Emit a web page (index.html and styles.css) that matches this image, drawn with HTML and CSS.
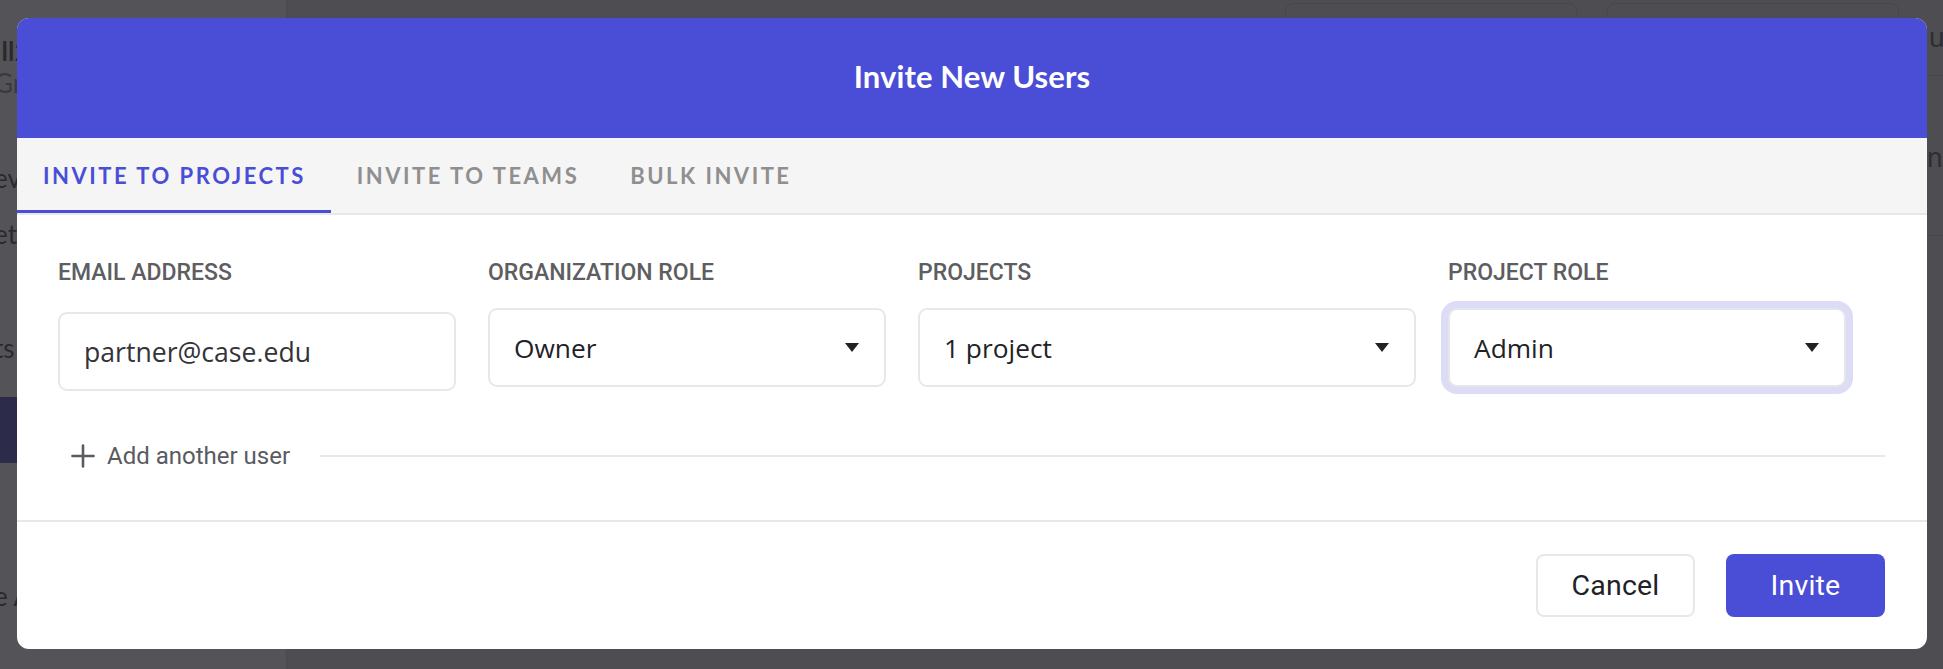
FILE: index.html
```html
<!DOCTYPE html>
<html lang="en">
<head>
<meta charset="utf-8">
<title>Invite New Users</title>
<link rel="stylesheet" href="styles.css">
</head>
<body>
<div class="app">
  <aside class="sidebar">
    <div class="sb-item sb-title">Ill2</div>
    <div class="sb-item sb-sub">Gr</div>
    <div class="sb-item sb-a">ev</div>
    <div class="sb-item sb-b">et</div>
    <div class="sb-item sb-c">ts</div>
    <div class="sb-active"></div>
    <div class="sb-item sb-d">e A</div>
  </aside>
  <main class="main">
    <div class="main-top">
      <span class="ghost-btn"></span>
      <span class="ghost-btn"></span>
      <span class="ghost-letter">u</span>
    </div>
    <div class="main-row"><span class="ghost-letter nt">nt</span></div>
  </main>
</div>

<div class="modal">
  <header class="modal-header">
    <h1 class="modal-title">Invite New Users</h1>
  </header>
  <nav class="tabs">
    <div class="tab tab-active">INVITE TO PROJECTS</div>
    <div class="tab">INVITE TO TEAMS</div>
    <div class="tab">BULK INVITE</div>
  </nav>
  <section class="modal-body">
    <div class="fields">
      <div class="field">
        <div class="label">EMAIL ADDRESS</div>
        <div class="input input-email">partner@case.edu</div>
      </div>
      <div class="field">
        <div class="label">ORGANIZATION ROLE</div>
        <div class="input select"><span>Owner</span><span class="caret"></span></div>
      </div>
      <div class="field field-wide">
        <div class="label">PROJECTS</div>
        <div class="input select"><span>1 project</span><span class="caret"></span></div>
      </div>
      <div class="field">
        <div class="label">PROJECT ROLE</div>
        <div class="input select select-focus"><span>Admin</span><span class="caret"></span></div>
      </div>
    </div>
    <div class="add-row">
      <svg class="plus" width="24" height="24" viewBox="0 0 24 24" aria-hidden="true">
        <path d="M12 1.5V22.5M1.5 12H22.5" stroke="#5a5a5f" stroke-width="2.6" stroke-linecap="round" fill="none"/>
      </svg>
      <span class="add-text">Add another user</span>
      <span class="add-line"></span>
    </div>
  </section>
  <footer class="modal-footer">
    <button class="btn btn-cancel">Cancel</button>
    <button class="btn btn-primary">Invite</button>
  </footer>
</div>
</body>
</html>
```

FILE: styles.css
```css
* { box-sizing: border-box; }

html, body {
  margin: 0;
  padding: 0;
}

body {
  width: 1943px;
  height: 669px;
  overflow: hidden;
  background: #4f4f53;
  font-family: "Open Sans", "Liberation Sans", sans-serif;
  position: relative;
}

/* dimmed app behind the modal */
.app {
  display: flex;
  height: 669px;
}

.sidebar {
  width: 287px;
  background: #545458;
  border-right: 1px solid #4a4a4e;
  padding-top: 36px;
  overflow: hidden;
  font-family: "Lato", sans-serif;
}

.sb-item {
  color: #2a2a2e;
  font-size: 26px;
  line-height: 30px;
  margin-left: -6px;
  white-space: nowrap;
}

.sb-title { font-weight: 700; height: 32px; }
.sb-sub { color: #3a3a3e; height: 95px; }
.sb-a { height: 56px; }
.sb-b { height: 114px; }
.sb-c { height: 64px; }
.sb-active {
  height: 66px;
  background: #2c2c4a;
}
.sb-d { margin-top: 118px; }

.main {
  flex: 1;
  background: #4e4e52;
}

.main-top {
  height: 76px;
  display: flex;
  justify-content: flex-end;
  align-items: flex-start;
  gap: 30px;
  padding: 3px 0 0 0;
  border-bottom: 1px solid #47474b;
}

.ghost-btn {
  width: 292px;
  height: 56px;
  border: 1px solid #48484c;
  border-radius: 8px;
}

.ghost-letter {
  color: #2e2e32;
  font-size: 28px;
  font-family: "Lato", sans-serif;
  margin-top: 16px;
  width: 14px;
  overflow: hidden;
}

.main-row {
  height: 160px;
  display: flex;
  justify-content: flex-end;
  align-items: center;
  border-bottom: 1px solid #47474b;
}

.ghost-letter.nt { width: 16px; margin-top: 0; }

/* modal */
.modal {
  position: absolute;
  left: 17px;
  top: 18px;
  width: 1910px;
  height: 631px;
  background: #ffffff;
  border-radius: 12px;
  overflow: hidden;
  display: flex;
  flex-direction: column;
}

.modal-header {
  height: 120px;
  padding-bottom: 4px;
  background: #4a4dd6;
  display: flex;
  align-items: center;
  justify-content: center;
  flex-shrink: 0;
}

.modal-title {
  margin: 0;
  color: #ffffff;
  font-family: "Lato", sans-serif;
  font-weight: 700;
  font-size: 31px;
  letter-spacing: 0.1px;
}

.tabs {
  height: 77px;
  background: #f5f5f5;
  border-bottom: 2px solid #e8e8e8;
  display: flex;
  flex-shrink: 0;
}

.tab {
  display: flex;
  align-items: center;
  padding: 3px 25px 0 26px;
  border-bottom: 3px solid transparent;
  font-family: "Lato", sans-serif;
  font-weight: 700;
  font-size: 22px;
  letter-spacing: 2.5px;
  color: #8f8f8f;
  white-space: nowrap;
}

.tab-active {
  color: #4a4dd6;
  border-bottom-color: #4a4dd6;
}

.modal-body {
  height: 305px;
  padding: 44px 42px 0 41px;
  flex-shrink: 0;
}

.fields {
  display: flex;
  gap: 32px;
}

.field {
  width: 398px;
  display: flex;
  flex-direction: column;
}

.field-wide { width: 498px; }

.label {
  font-family: "Roboto", sans-serif;
  font-weight: 500;
  font-size: 23px;
  line-height: 28px;
  color: #5d5d62;
  margin-bottom: 21px;
}

.input {
  height: 79px;
  border: 2px solid #e8e8e8;
  border-radius: 9px;
  background: #fff;
  display: flex;
  align-items: center;
  padding: 0 24px 0 24px;
  font-size: 26.3px;
  color: #2a2a2e;
}

.input-email {
  margin-top: 4px;
  color: #333338;
  font-weight: 400;
  font-size: 26.6px;
}

.select {
  justify-content: space-between;
  font-weight: 500;
  color: #222226;
}

.caret {
  width: 0;
  height: 0;
  border-left: 7.5px solid transparent;
  border-right: 7.5px solid transparent;
  border-top: 9px solid #222226;
  margin-right: 1px;
}

.select-focus {
  border-color: #e6e6ea;
  box-shadow: 0 0 0 7px #dcdcf6;
}

.add-row {
  margin-top: 41px;
  height: 48px;
  display: flex;
  align-items: center;
  padding-left: 13px;
}

.plus { flex-shrink: 0; }

.add-text {
  margin-left: 12px;
  font-family: "Roboto", sans-serif;
  font-size: 24px;
  color: #5a5a5f;
  white-space: nowrap;
}

.add-line {
  flex: 1;
  height: 2px;
  background: #e8e8e8;
  margin-left: 30px;
}

.modal-footer {
  flex: 1;
  border-top: 2px solid #e8e8e8;
  display: flex;
  justify-content: flex-end;
  align-items: center;
  gap: 31px;
  padding: 0 42px 0 0;
}

.btn {
  width: 159px;
  height: 63px;
  border-radius: 8px;
  font-family: "Roboto", sans-serif;
  font-weight: 400;
  font-size: 28.5px;
  letter-spacing: 0.2px;
  cursor: pointer;
}

.btn-cancel {
  background: #fff;
  border: 2px solid #e8e8e8;
  color: #222226;
}

.btn-primary {
  background: #4a4dd6;
  border: none;
  color: #ffffff;
}
```
